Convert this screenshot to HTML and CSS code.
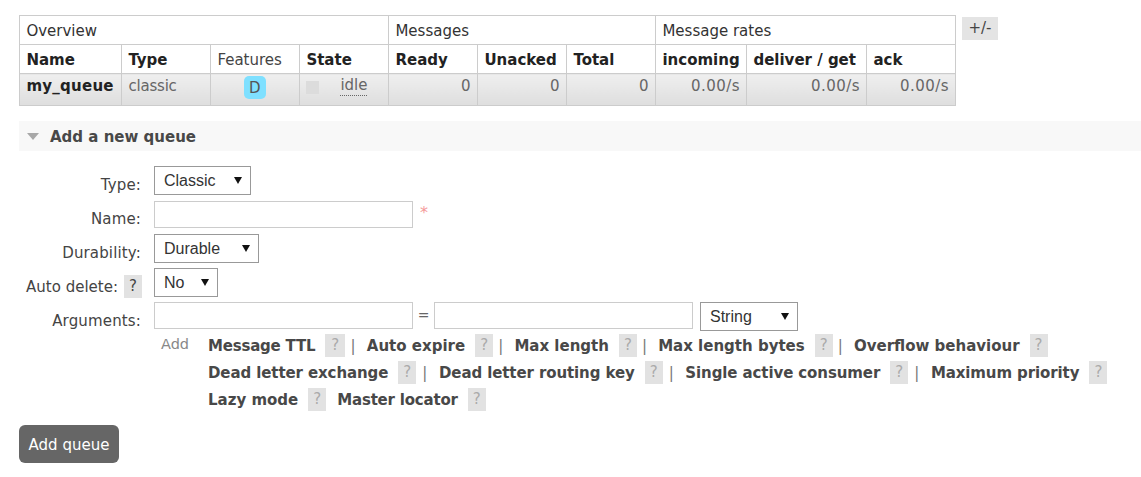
FILE: index.html
```html
<!DOCTYPE html>
<html lang="en">
<head>
<meta charset="utf-8">
<title>Queues</title>
<link rel="stylesheet" href="styles.css">
</head>
<body>
<div class="top">
  <table class="queues">
    <colgroup>
      <col class="c-name"><col class="c-type"><col class="c-num"><col class="c-num"><col class="c-num"><col class="c-num"><col class="c-num"><col class="c-in"><col class="c-del"><col class="c-ack">
    </colgroup>
    <thead>
      <tr class="group"><th colspan="4">Overview</th><th colspan="3">Messages</th><th colspan="3">Message rates</th></tr>
      <tr class="heads"><th>Name</th><th>Type</th><th class="plain">Features</th><th>State</th><th>Ready</th><th>Unacked</th><th>Total</th><th>incoming</th><th>deliver / get</th><th>ack</th></tr>
    </thead>
    <tbody>
      <tr>
        <td class="qname">my_queue</td>
        <td class="qtype">classic</td>
        <td class="center"><span class="badge">D</span></td>
        <td><span class="state"><span class="dot"></span><span class="idle">idle</span></span></td>
        <td class="num">0</td><td class="num">0</td><td class="num">0</td>
        <td class="num">0.00/s</td><td class="num">0.00/s</td><td class="num">0.00/s</td>
      </tr>
    </tbody>
  </table>
  <span class="plusminus">+/-</span>
</div>

<h2 class="section"><span class="tri"></span><span class="section-title">Add a new queue</span></h2>

<form class="form">
  <label class="lbl l-type">Type:</label>
  <div class="sel w-classic"><select><option>Classic</option></select></div>

  <label class="lbl l-name">Name:</label>
  <div class="field-row"><input class="text" type="text"><span class="req">*</span></div>

  <label class="lbl l-dur">Durability:</label>
  <div class="sel w-durable"><select><option>Durable</option></select></div>

  <label class="lbl l-auto">Auto delete: <span class="help">?</span></label>
  <div class="sel w-no"><select><option>No</option></select></div>

  <label class="lbl l-args">Arguments:</label>
  <div class="field-row">
    <input class="text" type="text"><span class="eq">=</span><input class="text" type="text">
    <div class="sel w-string"><select><option>String</option></select></div>
  </div>

  <div class="empty"></div>
  <div class="adds">
    <span class="add">Add</span>
    <div class="opts">
      <div class="line"><b class="ttl">Message TTL</b><span class="help dim">?</span><i>|</i><b>Auto expire</b><span class="help dim">?</span><i>|</i><b>Max length</b><span class="help dim">?</span><i>|</i><b>Max length bytes</b><span class="help dim">?</span><i>|</i><b>Overflow behaviour</b><span class="help dim">?</span></div>
      <div class="line tight"><b>Dead letter exchange</b><span class="help dim">?</span><i>|</i><b>Dead letter routing key</b><span class="help dim">?</span><i>|</i><b>Single active consumer</b><span class="help dim">?</span><i>|</i><b>Maximum priority</b><span class="help dim">?</span></div>
      <div class="line"><b>Lazy mode</b><span class="help dim">?</span><b class="after">Master locator</b><span class="help dim">?</span></div>
    </div>
  </div>
</form>
<button class="submit" type="button">Add queue</button>
</body>
</html>
```
FILE: styles.css
```css
* { box-sizing: border-box; }
html, body { margin: 0; }
body {
  padding: 15px 0 0 19px;
  background: #fff;
  color: #484848;
  font: 15px/20px "DejaVu Sans", Verdana, sans-serif;
  overflow: hidden;
}
.top { display: flex; align-items: flex-start; gap: 6px; }
.queues {
  border-collapse: collapse;
  table-layout: fixed;
  width: 937px;
  border: 1px solid #ccc;
  font-size: 15px;
}
.c-name { width: 102px; }
.c-type, .c-num { width: 89px; }
.c-in { width: 91px; }
.c-del { width: 120px; }
.c-ack { width: 89px; }
.queues th, .queues td {
  border: 1px solid #ccc;
  padding: 0 7px 0 6.4px;
  text-align: left;
  white-space: nowrap;
  overflow: hidden;
}
.queues th { font-weight: normal; color: #333; height: 29px; padding-top: 2px; }
.heads th { font-weight: bold; color: #222; }
.heads th.plain { font-weight: normal; color: #444; }
.queues td {
  height: 32px;
  color: #666;
  vertical-align: top;
  padding-top: 2px;
  background: linear-gradient(#efefef, #dedede);
}
.queues td.qname { font-weight: bold; color: #222; letter-spacing: .25px; }
.queues td.qtype { letter-spacing: -.2px; }
.queues td.num { text-align: right; padding-right: 6px; letter-spacing: .45px; }
.queues td.center { text-align: center; padding-top: 2px; }
.badge {
  display: inline-block;
  width: 22px;
  height: 23px;
  line-height: 24px;
  background: #7fe0ff;
  border-radius: 5px;
  color: #555;
  text-align: center;
}
.state { display: flex; align-items: flex-start; }
.dot { width: 13px; height: 13px; margin-top: 5px; background: #dcdcdc; }
.idle { margin-left: 21px; border-bottom: 1px dotted #666; line-height: 19px; }
.plusminus {
  margin-top: 2px;
  width: 36px;
  height: 23px;
  line-height: 22px;
  background: #e4e4e4;
  color: #444;
  text-align: center;
}
.section {
  display: flex;
  align-items: center;
  margin: 15px 0 0;
  height: 30px;
  padding-left: 8px;
  background: #f8f8f8;
  color: #484848;
  font-size: 15px;
  font-weight: bold;
}
.section-title { margin-left: 1px; margin-top: 2px; }
.tri {
  width: 0;
  height: 0;
  margin-right: 10px;
  margin-top: 1px;
  border-left: 6.5px solid transparent;
  border-right: 6.5px solid transparent;
  border-top: 7px solid #a8a8a8;
}
.form {
  display: grid;
  grid-template-columns: 135px 1fr;
  margin-top: 15px;
  grid-template-rows: 35px 33px 34px 34px 27px auto;
}
.lbl { text-align: right; padding-right: 13px; padding-top: 9px; line-height: 20px; white-space: nowrap; color: #444; letter-spacing: .15px; }
.l-auto { padding-right: 12px; padding-top: 9px; display: flex; justify-content: flex-end; gap: 6px; align-items: flex-start; letter-spacing: 0; }
.l-name { padding-top: 8px; }
.l-args { padding-top: 9px; }
.l-auto .help { margin-top: -2px; }
.sel { position: relative; height: 29px; }
.sel select {
  appearance: none;
  -webkit-appearance: none;
  width: 100%;
  height: 29px;
  padding: 0 0 0 9px;
  border: 1px solid #999;
  border-radius: 0;
  background: #fff;
  color: #333;
  font: 16px "Liberation Sans", Arial, sans-serif;
}
.sel::after {
  content: "";
  position: absolute;
  right: 9px;
  top: 11px;
  border-left: 4px solid transparent;
  border-right: 4px solid transparent;
  border-top: 7px solid #111;
  pointer-events: none;
}
.w-classic { width: 97px; }
.w-durable { width: 105px; }
.w-no { width: 64px; }
.w-string { width: 98px; margin-left: 7px; }
.field-row { display: flex; align-items: flex-start; }
.text {
  width: 259px;
  height: 27px;
  border: 1px solid #ccc;
  border-radius: 0;
  background: #fff;
  padding: 0;
}
.req { margin-left: 7px; margin-top: 2px; color: #f59a9a; font-size: 16px; line-height: 20px; }
.eq { width: 21px; text-align: center; color: #666; line-height: 27px; font-size: 14px; }
.help {
  display: inline-block;
  height: 23px;
  width: 18px;
  line-height: 23px;
  background: #e2e2e2;
  color: #444;
  text-align: center;
  font-weight: normal;
  font-size: 15px;
}
.help.dim { color: #aaa; margin-left: 10px; }
.adds { display: flex; margin-top: 3px; }
.add { margin-left: 7px; width: 47px; margin-top: 2px; color: #888; line-height: 20px; font-size: 14.5px; }
.opts { flex: 1; }
.line { display: flex; align-items: center; height: 27px; white-space: nowrap; color: #484848; }
.line b { font-weight: bold; }
.line i { font-style: normal; color: #777; margin: 0 11.2px 0 5px; }
.line.tight { letter-spacing: -.1px; }
.line.tight i { margin: 0 11.7px 0 6px; }
.line .ttl { letter-spacing: -.2px; }
.line .ttl + .help { width: 19.5px; margin-right: .7px; }
.line .after { margin-left: 11px; letter-spacing: -.2px; }
.submit {
  display: block;
  margin-top: 12px;
  width: 100px;
  height: 38px;
  padding: 2px 0 0;
  border: 0;
  border-radius: 6px;
  background: #666;
  color: #fff;
  font: 15px "DejaVu Sans", Verdana, sans-serif;
}
```
